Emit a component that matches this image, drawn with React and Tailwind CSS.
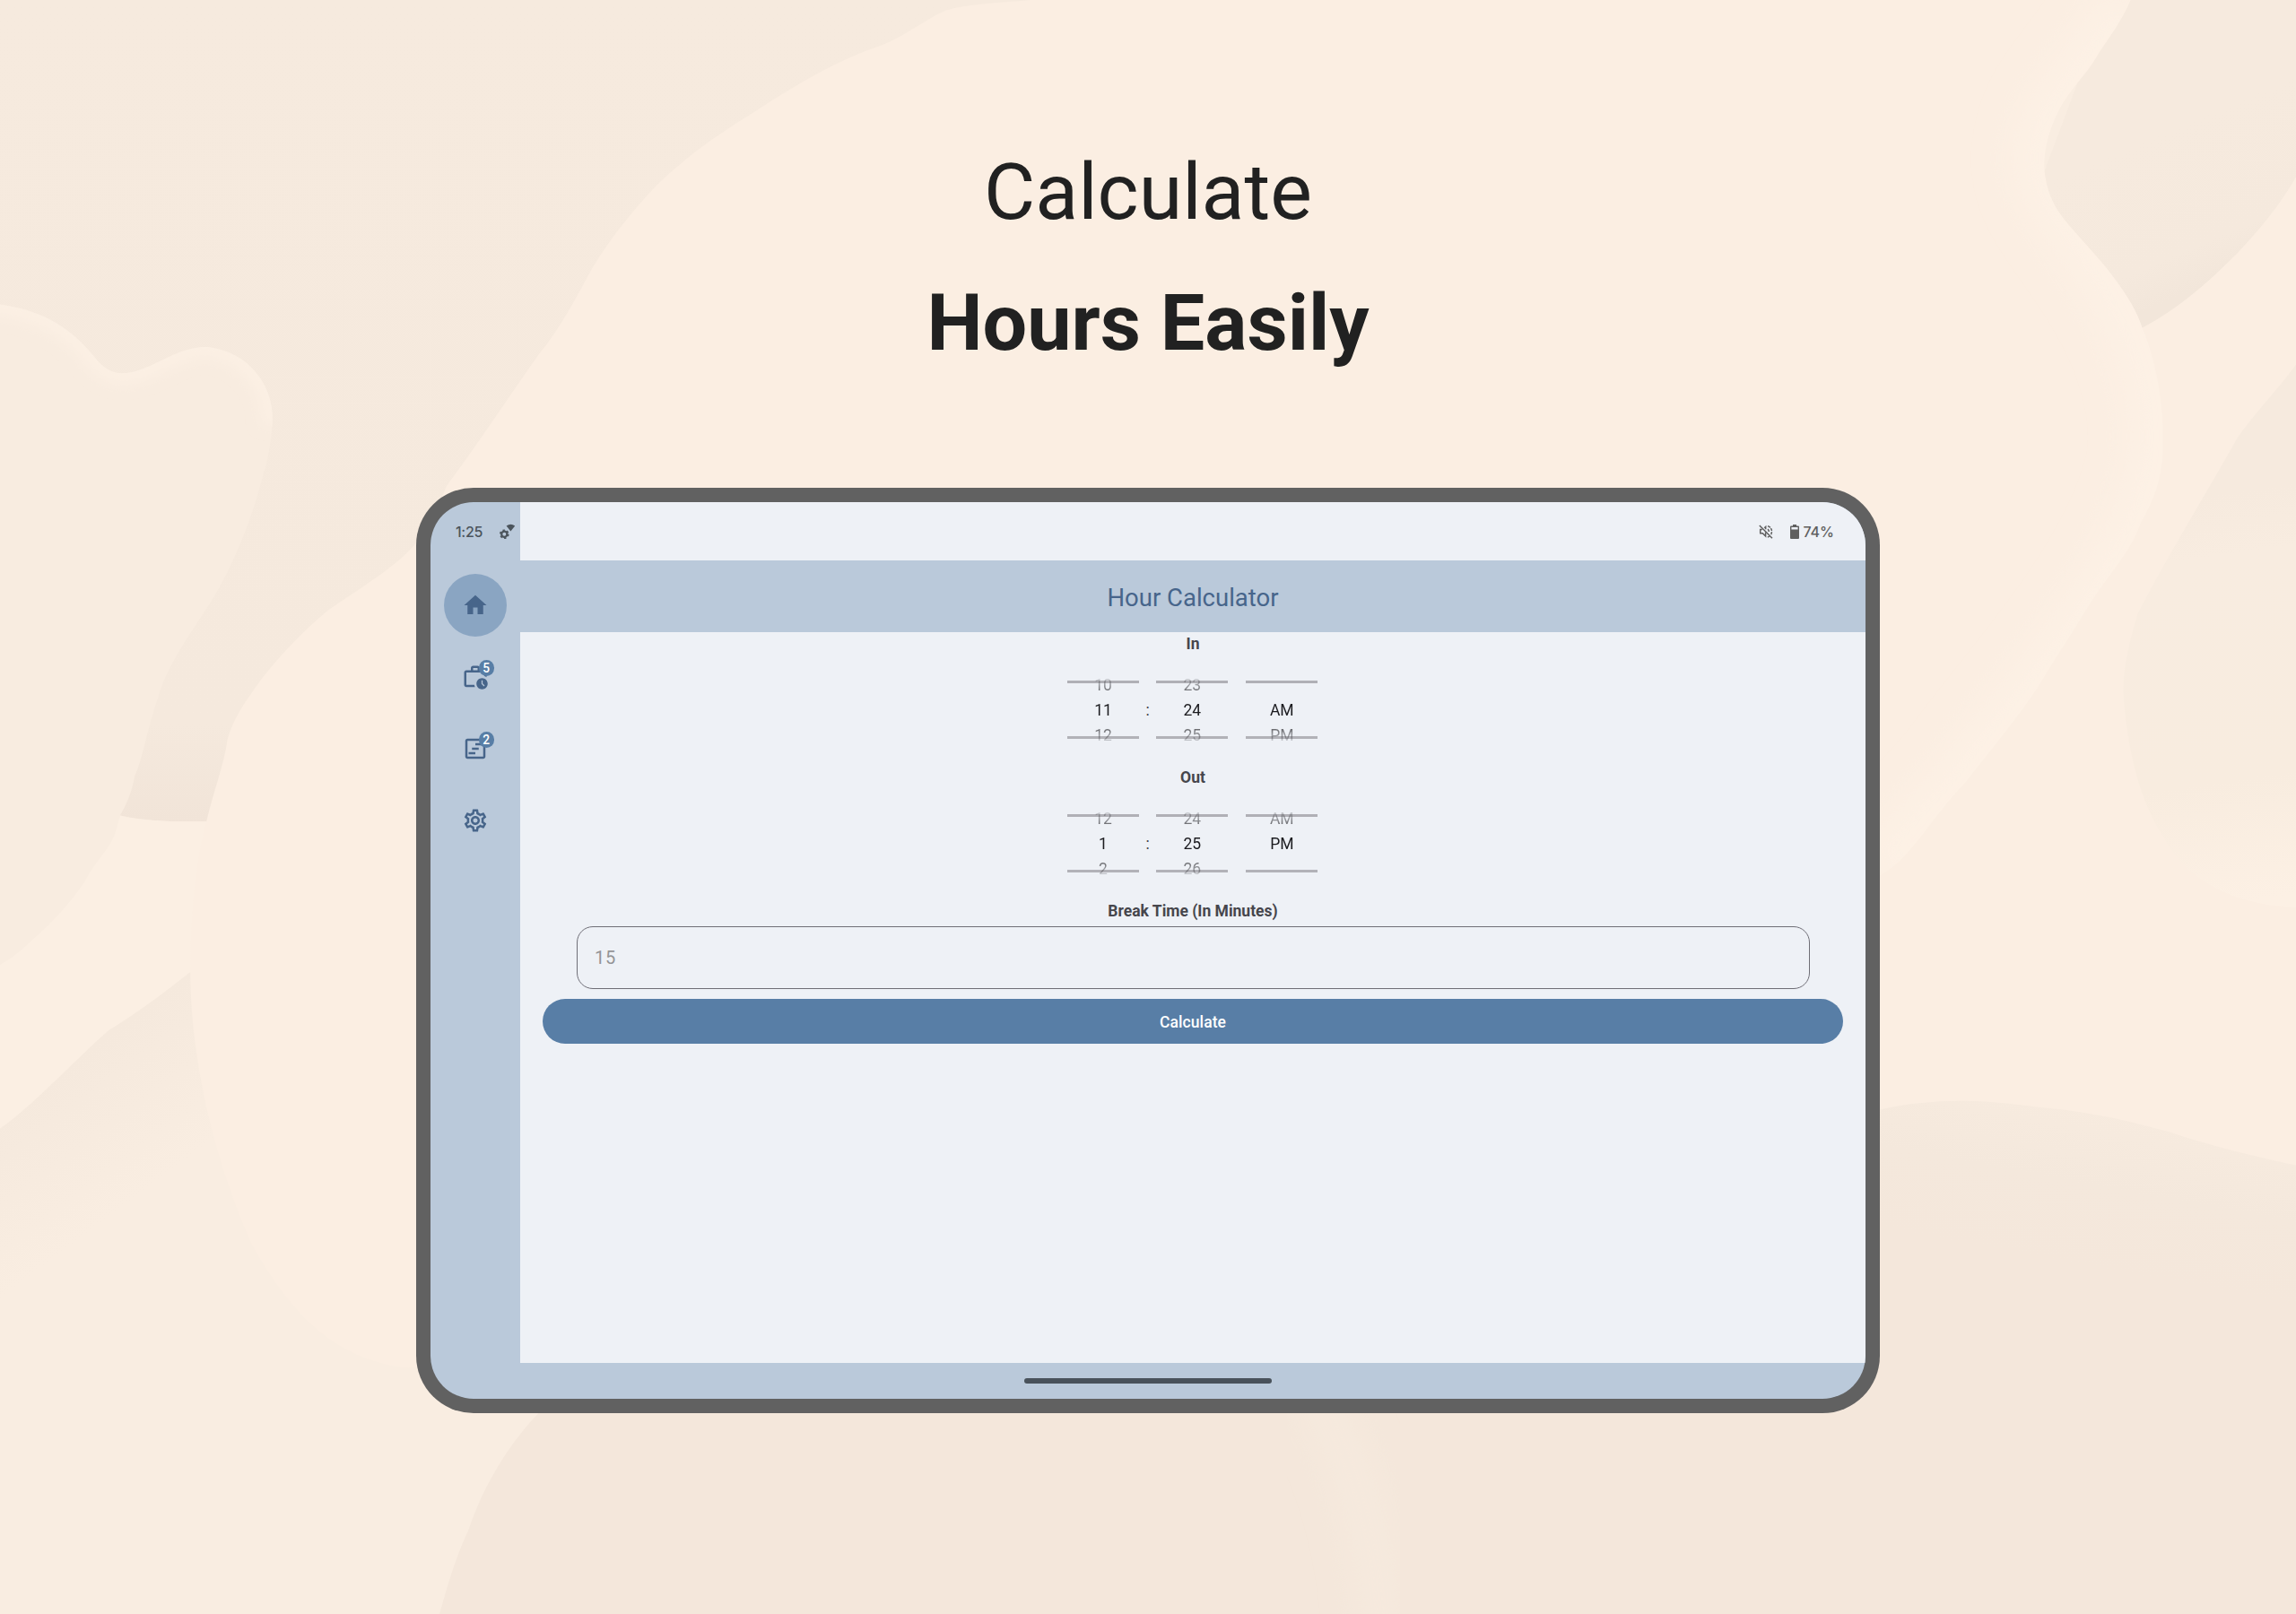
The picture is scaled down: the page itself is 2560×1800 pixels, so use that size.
import React from "react";
import { MdHome, MdOutlineWorkHistory, MdOutlineViewTimeline, MdOutlineSettings } from "react-icons/md";

const BLOB =
  "M704 0C680 2 660 3 646 7C630 14 618 25 602 31C572 41 545 57 516 76C490 92 470 106 449 126C430 146 416 164 404 184C392 206 382 225 368 242C345 275 325 305 305 332C298 350 290 362 284 371C270 388 245 402 224 417C208 430 193 446 180 462C169 477 158 492 155 507C153 522 146 540 141 561C133 590 130 630 130 664C130 720 145 790 172 850C200 900 230 928 275 934L1284 960V598C1305 587 1320 557 1341 536C1360 512 1378 490 1392 469C1404 449 1414 434 1425 416C1440 392 1455 378 1462 357C1472 340 1477 325 1477 305C1478 275 1472 245 1463 224C1459 212 1453 203 1446 193C1434 176 1420 163 1409 149C1400 138 1396 124 1396 111C1397 95 1402 82 1409 70C1418 56 1427 48 1434 35C1443 22 1450 12 1455 0Z";
const LEAF =
  "M-40 200L0 208C30 212 50 225 67 247C72 252 77 255 83 255C102 255 120 236 142 237C168 240 188 262 186 290C184 310 182 318 180 323C172 355 160 385 144 411C128 436 114 455 108 476C100 500 97 520 92 530C90 542 86 550 82 557C80 564 79 570 76 575C70 585 63 592 58 602C48 617 36 630 22 642C14 650 7 655 0 659L-40 680Z";

function Backdrop() {
  return (
    <svg className="absolute inset-0 h-full w-full" viewBox="0 0 1568 1102.5" preserveAspectRatio="none" aria-hidden="true">
      <defs>
        <linearGradient id="sand" x1="0" y1="0" x2="0" y2="1">
          <stop offset="0" stopColor="#f6eade" />
          <stop offset="0.88" stopColor="#f5e9dd" />
          <stop offset="1" stopColor="#f1e4d8" />
        </linearGradient>
        <linearGradient id="cove" gradientUnits="userSpaceOnUse" x1="1480" y1="90" x2="1522" y2="188">
          <stop offset="0" stopColor="#f6eade" />
          <stop offset="0.75" stopColor="#f5e9dd" />
          <stop offset="1" stopColor="#f2e6da" />
        </linearGradient>
        <linearGradient id="dune" gradientUnits="userSpaceOnUse" x1="30" y1="740" x2="90" y2="820">
          <stop offset="0" stopColor="#f5e9dd" />
          <stop offset="1" stopColor="#f9ede1" />
        </linearGradient>
        <linearGradient id="bowl" gradientUnits="userSpaceOnUse" x1="1500" y1="340" x2="1540" y2="615">
          <stop offset="0" stopColor="#f6eade" />
          <stop offset="0.15" stopColor="#f8ece0" />
          <stop offset="0.7" stopColor="#f8ecdf" />
          <stop offset="1" stopColor="#fcf0e4" />
        </linearGradient>
        <linearGradient id="hill" gradientUnits="userSpaceOnUse" x1="1420" y1="752" x2="1400" y2="860">
          <stop offset="0" stopColor="#f7ebdf" />
          <stop offset="0.5" stopColor="#f4e8dc" />
          <stop offset="1" stopColor="#f4e7db" />
        </linearGradient>
        <clipPath id="blobClip">
          <path d={BLOB} />
        </clipPath>
        <clipPath id="leafClip">
          <path d={LEAF} />
        </clipPath>
        <filter id="soft" x="-20%" y="-20%" width="140%" height="140%">
          <feGaussianBlur stdDeviation="12" />
        </filter>
        <filter id="softSmall" x="-20%" y="-20%" width="140%" height="140%">
          <feGaussianBlur stdDeviation="5" />
        </filter>
      </defs>
      <rect width="1568" height="1103" fill="#f9ede1" />
      <path d="M0 0H720V340L141 561C130 562 100 561 82 557L0 300Z" fill="url(#sand)" />
      <path d="M82 557C100 562 130 561 141 561L150 664H130C110 680 92 693 74 704C50 725 25 753 0 771V640Z" fill="#fbefe3" />
      <path d="M0 771C25 753 50 725 74 704C92 693 110 680 130 664L200 700V860L0 900Z" fill="url(#dune)" />
      <path d={LEAF} fill="#f8ece0" />
      <g clipPath="url(#leafClip)">
        <path d="M-40 200L0 208C30 212 50 225 67 247C72 252 77 255 83 255C102 255 120 236 142 237C168 240 188 262 186 290" fill="none" stroke="#fcf0e4" strokeWidth="14" filter="url(#softSmall)" />
      </g>
      <path d="M1440 0H1568V121C1556 142 1542 158 1528 173C1506 195 1486 212 1463 224L1380 160Z" fill="url(#cove)" />
      <path d="M1463 224C1486 212 1506 195 1528 173C1542 158 1556 142 1568 121V800L1284 800V560Z" fill="#fbeee2" />
      <path d="M1568 249C1554 268 1540 282 1528 299C1505 340 1480 380 1460 419C1455 435 1450 455 1450 473C1453 515 1462 548 1477 571C1495 605 1530 618 1568 620Z" fill="url(#bowl)" />
      <path d={BLOB} fill="#fbeee2" />
      <g clipPath="url(#blobClip)">
        <path d="M1455 0C1440 45 1396 70 1396 111C1400 150 1477 200 1477 305C1470 390 1380 480 1341 536L1284 598" fill="none" stroke="#fdf1e5" strokeWidth="44" filter="url(#soft)" />
      </g>
      <path d="M1284 758C1300 754 1320 752 1340 752C1362 752 1380 755 1400 757C1430 760 1455 766 1481 773C1510 783 1540 790 1568 796V1103H300C307 1078 312 1062 320 1045C330 1015 348 985 370 963L1284 900Z" fill="url(#hill)" />
      <path d="M890 940Q940 1010 945 1130" fill="none" stroke="#f6eade" strokeWidth="26" filter="url(#soft)" />
    </svg>
  );
}

function Wheel({ items, className = "" }) {
  return (
    <div className={`relative h-[84px] w-20 ${className}`}>
      <div className="absolute inset-x-0 top-[9px] h-[2.5px] bg-[#b0b0b6]" />
      <div className="absolute inset-x-0 top-[71px] h-[3px] bg-[#b2b2b8]" />
      <div className="relative flex h-full flex-col text-center [mask-image:linear-gradient(to_bottom,transparent_2px,black_32px,black_52px,transparent_82px)]">
        {items.map((t, i) => (
          <span key={i} className="h-7 text-[17.5px] leading-7 text-[#1b1b1f]">{t}</span>
        ))}
      </div>
    </div>
  );
}

function TimePicker({ label, hours, minutes, periods }) {
  return (
    <section className="flex flex-col items-center">
      <h2 className="h-[25px] text-[17.5px] leading-[27px] font-bold text-[#46464c]">{label}</h2>
      <div className="flex h-[124px] w-[280px] items-center">
        <Wheel items={hours} />
        <span className="w-[19.3px] text-center text-[17.5px] leading-7 text-[#46464c]">:</span>
        <Wheel items={minutes} />
        <Wheel items={periods} className="ml-5" />
      </div>
    </section>
  );
}

function RailItem({ icon: Icon, active, badge }) {
  return (
    <div className={`relative flex h-[70px] w-[70px] items-center justify-center rounded-full ${active ? "bg-[#8aa5c2]" : ""}`}>
      <Icon className="h-[30px] w-[30px] text-[#47658a]" />
      {badge && (
        <span className="absolute top-4 left-[38.5px] flex h-[18px] w-[17.5px] items-center justify-center rounded-full bg-[#587ea6] pt-px text-[13.75px] leading-none font-medium text-white">
          {badge}
        </span>
      )}
    </div>
  );
}

function NetworkIcon() {
  return (
    <svg className="h-[18px] w-[18px]" viewBox="0 0 18 18" fill="#4b545c">
      <path d="M7.6 2.6Q12.4-1.2 17.2 2.6L12.4 8.6Z" />
      <circle cx="5.3" cy="11.7" r="3.1" fill="none" stroke="#4b545c" strokeWidth="2.2" />
      <circle cx="5.3" cy="11.7" r="4.5" fill="none" stroke="#4b545c" strokeWidth="1.6" strokeDasharray="2.4 2.31" />
    </svg>
  );
}

function MutedIcon() {
  return (
    <svg className="h-4 w-4" viewBox="0 0 16 16" fill="none" stroke="#5f5f5f" strokeWidth="1.5">
      <path d="M.8 1L15 15.2" />
      <path d="M3.8 5.4H1.7V9.8H4.3L7.6 13V8.6" />
      <path d="M6.2 3.8L7.7 2.4V5.2" />
      <path d="M10 5.2Q11.4 6.2 11.3 8" />
      <path d="M10 1.6Q15 3.6 14.4 8.6Q14.2 10 13.6 11" strokeDasharray="3.2 1" />
      <path d="M9.8 14Q11 13.7 11.8 13" />
    </svg>
  );
}

function BatteryIcon() {
  return (
    <svg className="h-4 w-[10px]" viewBox="0 0 10 16">
      <path fill="#5f5f5f" fillRule="evenodd" d="M3 0H7V1.5H9Q10 1.5 10 2.5V15Q10 16 9 16H1Q0 16 0 15V2.5Q0 1.5 1 1.5H3ZM1.4 3V5.6H8.6V3Z" />
    </svg>
  );
}

export default function App() {
  return (
    <main className="relative h-[1800px] w-[2560px] overflow-hidden font-[Roboto,sans-serif]">
      <Backdrop />
      <div className="relative flex flex-col items-center">
        <h1 className="mt-[141px] flex h-[403px] flex-col items-center text-[88px] leading-[146px] text-[#212121]">
          <span>Calculate</span>
          <span className="font-bold">Hours Easily</span>
        </h1>
        <div className="h-[1032px] w-[1632px] rounded-[64px] bg-[#616161] p-4">
          <div className="flex h-full overflow-hidden rounded-[48px] bg-[#bac9da]">
            <aside className="flex w-[100px] flex-col items-center">
              <div className="flex h-[65px] w-full items-center pl-[28px]">
                <span className="w-[49px] font-[Inter,sans-serif] text-[16px] font-medium tracking-[-0.3px] text-[#4b545c]">1:25</span>
                <NetworkIcon />
              </div>
              <nav className="flex flex-col gap-2.5 pt-[15px]">
                <RailItem icon={MdHome} active />
                <RailItem icon={MdOutlineWorkHistory} badge="5" />
                <RailItem icon={MdOutlineViewTimeline} badge="2" />
                <RailItem icon={MdOutlineSettings} />
              </nav>
            </aside>
            <div className="flex w-[1500px] flex-col">
              <div className="flex h-[65px] items-center justify-end bg-[#eef1f6] pr-[35px]">
                <MutedIcon />
                <span className="w-[19px]" />
                <BatteryIcon />
                <span className="ml-1 font-[Inter,sans-serif] text-[16px] font-medium text-[#5f5f5f]">74%</span>
              </div>
              <header className="flex h-20 items-center justify-center pt-[3px] text-[27.5px] text-[#47658b]">Hour Calculator</header>
              <div className="flex h-[815px] flex-col bg-[#eef1f6]">
                <TimePicker label="In" hours={["10", "11", "12"]} minutes={["23", "24", "25"]} periods={["", "AM", "PM"]} />
                <TimePicker label="Out" hours={["12", "1", "2"]} minutes={["24", "25", "26"]} periods={["AM", "PM", ""]} />
                <h2 className="h-[25px] text-center text-[17.5px] leading-[26px] font-bold text-[#46464c]">Break Time (In Minutes)</h2>
                <div className="mx-auto mt-[5px] flex h-[70px] w-[1375px] items-center rounded-[18px] border-[1.5px] border-[#6f6e76] pl-[19.5px] text-[20px] tracking-[0.8px] text-[#949496]">15</div>
                <button className="mx-[25px] mt-[11px] h-[50px] rounded-full bg-[#587ea6] pt-0.5 text-[17.5px] font-medium tracking-[0.1px] text-white">Calculate</button>
              </div>
            </div>
          </div>
        </div>
        <div className="-mt-[39px] h-[6px] w-[276px] rounded-full bg-[#49525b]" />
      </div>
    </main>
  );
}
